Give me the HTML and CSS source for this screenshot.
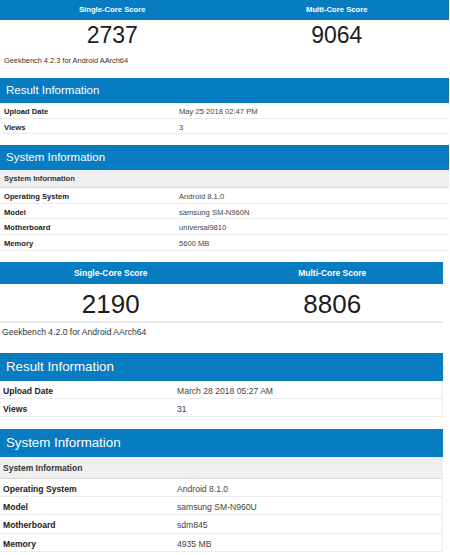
FILE: index.html
```html
<!DOCTYPE html>
<html>
<head>
<meta charset="utf-8">
<link rel="stylesheet" href="styles.css">
</head>
<body>
<div class="shot shot-a">
  <div class="scores">
    <div class="score-head">Single-Core Score</div>
    <div class="score-head">Multi-Core Score</div>
    <div class="score-val">2737</div>
    <div class="score-val">9064</div>
  </div>
  <div class="version">Geekbench 4.2.3 for Android AArch64</div>
  <div class="panel">
    <div class="panel-head">Result Information</div>
    <div class="row"><div class="lbl">Upload Date</div><div class="val">May 25 2018 02:47 PM</div></div>
    <div class="row"><div class="lbl">Views</div><div class="val">3</div></div>
  </div>
  <div class="panel">
    <div class="panel-head">System Information</div>
    <div class="sub">System Information</div>
    <div class="row"><div class="lbl">Operating System</div><div class="val">Android 8.1.0</div></div>
    <div class="row"><div class="lbl">Model</div><div class="val">samsung SM-N960N</div></div>
    <div class="row"><div class="lbl">Motherboard</div><div class="val">universal9810</div></div>
    <div class="row"><div class="lbl">Memory</div><div class="val">5600 MB</div></div>
  </div>
</div>
<div class="shot shot-b">
  <div class="scores">
    <div class="score-head">Single-Core Score</div>
    <div class="score-head">Multi-Core Score</div>
    <div class="score-val">2190</div>
    <div class="score-val">8806</div>
  </div>
  <div class="version">Geekbench 4.2.0 for Android AArch64</div>
  <div class="panel">
    <div class="panel-head">Result Information</div>
    <div class="row"><div class="lbl">Upload Date</div><div class="val">March 28 2018 05:27 AM</div></div>
    <div class="row"><div class="lbl">Views</div><div class="val">31</div></div>
  </div>
  <div class="panel">
    <div class="panel-head">System Information</div>
    <div class="sub">System Information</div>
    <div class="row"><div class="lbl">Operating System</div><div class="val">Android 8.1.0</div></div>
    <div class="row"><div class="lbl">Model</div><div class="val">samsung SM-N960U</div></div>
    <div class="row"><div class="lbl">Motherboard</div><div class="val">sdm845</div></div>
    <div class="row"><div class="lbl">Memory</div><div class="val">4935 MB</div></div>
  </div>
</div>
</body>
</html>
```
FILE: styles.css
```css
html, body {
  margin: 0;
  padding: 0;
  background: #ffffff;
}
body {
  font-family: "Liberation Sans", Arial, sans-serif;
  color: #222;
  width: 450px;
  height: 555px;
  overflow: hidden;
}
.shot {
  display: flex;
  flex-direction: column;
}
.scores {
  display: grid;
  grid-template-columns: 1fr 1fr;
}
.score-head {
  background: #077cc1;
  color: #fff;
  font-weight: bold;
  text-align: center;
}
.score-val {
  text-align: center;
  color: #1d1d1d;
}
.version {
  color: #333;
}
.panel-head {
  background: #077cc1;
  color: #fff;
}
.sub {
  background: #efefef;
  border-bottom: 1px solid #dcdcdc;
  font-weight: bold;
  color: #333;
}
.row {
  display: grid;
  border-bottom: 1px solid #ececec;
  box-sizing: border-box;
}
.lbl {
  font-weight: bold;
  color: #222;
}
.val {
  color: #444;
}

/* first screenshot */
.shot-a {
  width: 449px;
}
.shot-a .score-head {
  height: 20px;
  line-height: 20px;
  font-size: 7.7px;
}
.shot-a .score-val {
  font-size: 23px;
  line-height: 30px;
}
.shot-a .version {
  font-size: 7.4px;
  line-height: 12px;
  padding-left: 4px;
  margin-top: 5px;
  margin-bottom: 11px;
}
.shot-a .panel {
  margin-bottom: 11px;
}
.shot-a .panel-head {
  height: 25px;
  line-height: 25px;
  font-size: 11.5px;
  padding-left: 6px;
}
.shot-a .sub {
  height: 18px;
  line-height: 17px;
  font-size: 7.6px;
  padding-left: 4px;
  box-sizing: border-box;
}
.shot-a .row {
  grid-template-columns: 179px 1fr;
  height: 15.6px;
  line-height: 17px;
  font-size: 7.6px;
}
.shot-a .lbl {
  padding-left: 4px;
}

/* second screenshot */
.shot-b {
  width: 443px;
}
.shot-b .score-head {
  height: 22px;
  line-height: 22px;
  font-size: 8.5px;
}
.shot-b .score-val {
  font-size: 26px;
  line-height: 34px;
  padding-top: 3px;
  border-bottom: 2px solid #e9e9e9;
}
.shot-b .version {
  font-size: 8.6px;
  line-height: 14px;
  padding-left: 2px;
  margin-top: 2px;
  margin-bottom: 14px;
}
.shot-b .panel {
  margin-bottom: 12px;
}
.shot-b .panel-head {
  height: 28px;
  line-height: 28px;
  font-size: 13.3px;
  padding-left: 6px;
}
.shot-b .sub {
  height: 22px;
  line-height: 22px;
  font-size: 8.5px;
  padding-left: 3px;
  box-sizing: border-box;
}
.shot-b .row {
  grid-template-columns: 177px 1fr;
  height: 18.2px;
  line-height: 21px;
  font-size: 8.6px;
  border-right: 1px solid #ececec;
}
.shot-b .lbl {
  padding-left: 3px;
}
```
